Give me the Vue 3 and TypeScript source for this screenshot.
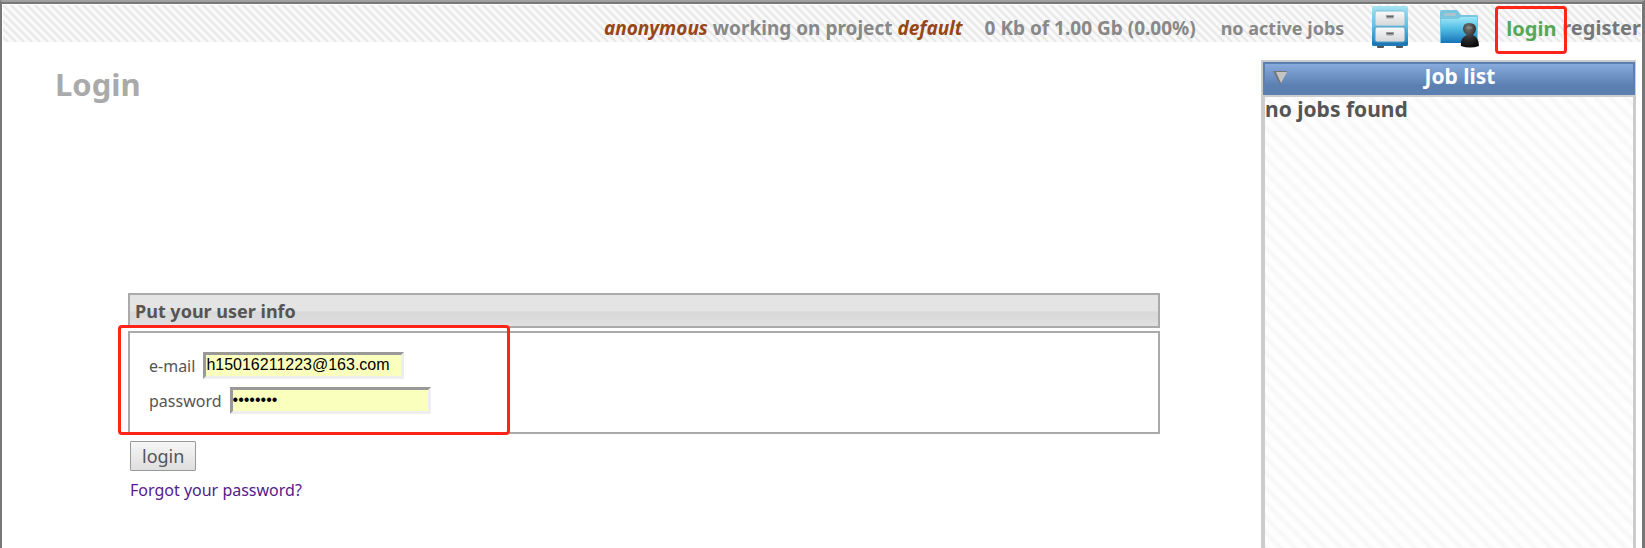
<script setup lang="ts">
import { ref } from 'vue'

const email = ref<string>('h15016211223@163.com')
const password = ref<string>('password')
const jobsOpen = ref<boolean>(true)
</script>

<template>
  <div class="page">
    <header class="topbar">
      <p class="status"><em>anonymous</em> working on project <em>default</em></p>
      <p class="quota">0 Kb of 1.00 Gb (0.00%)</p>
      <p class="active">no active jobs</p>
      <button class="icon cabinet" type="button" aria-label="Files">
        <svg width="36" height="42" viewBox="0 0 36 42">
          <defs>
            <linearGradient id="cab" x1="0" y1="0" x2="0" y2="1">
              <stop offset="0" stop-color="#a4e3f2" />
              <stop offset=".5" stop-color="#62bfe2" />
              <stop offset="1" stop-color="#1878b8" />
            </linearGradient>
            <linearGradient id="drawer" x1="0" y1="0" x2="0" y2="1">
              <stop offset="0" stop-color="#fafafa" />
              <stop offset="1" stop-color="#d4d6d8" />
            </linearGradient>
          </defs>
          <rect x="5" y="38" width="7" height="4" rx="1" fill="#50565a" />
          <rect x="24" y="38" width="7" height="4" rx="1" fill="#50565a" />
          <rect x="0" y="0" width="36" height="40" rx="2" fill="url(#cab)" />
          <path d="M0 36H36V38Q36 40 34 40H2Q0 40 0 38Z" fill="#1f78b4" />
          <rect x="3" y="5" width="30" height="15" rx="2" fill="url(#drawer)" stroke="#7cc0dc" />
          <rect x="3" y="21" width="30" height="15" rx="2" fill="url(#drawer)" stroke="#4a9fcc" />
          <path d="M14 9H22V11Q22 12.500 20 12.500H16Q14 12.500 14 11Z" fill="#9a9c9f" />
          <path d="M14 26H22V28Q22 29.500 20 29.500H16Q14 29.500 14 28Z" fill="#9a9c9f" />
          <path d="M15 10.500H21M15 27.500H21" stroke="#606264" />
        </svg>
      </button>
      <button class="icon folder" type="button" aria-label="Projects">
        <svg width="40" height="38" viewBox="0 0 40 38">
          <defs>
            <linearGradient id="fold" x1="0" y1="0" x2="0" y2="1">
              <stop offset="0" stop-color="#a0e8fa" />
              <stop offset=".45" stop-color="#52bce4" />
              <stop offset="1" stop-color="#1674b8" />
            </linearGradient>
            <radialGradient id="pawn" cx=".4" cy=".2" r=".8">
              <stop offset="0" stop-color="#777" />
              <stop offset=".5" stop-color="#333" />
              <stop offset="1" stop-color="#0c0c0c" />
            </radialGradient>
          </defs>
          <path d="M0 2Q0 0 2 0H17L21 5H36Q38 5 38 7V33H0Z" fill="#78c5dd" />
          <rect x="4" y="3" width="12" height="3" rx="1" fill="#a9c4cc" />
          <path d="M1 9H18L21 7H37V33H1Z" fill="url(#fold)" />
          <path d="M21 36Q20 28 27 25Q23 22 23 19Q23 13 29 13Q36 13 36 19Q36 22 33 25Q39 28 39 36Q30 39 21 36Z" fill="url(#pawn)" />
          <path d="M26 18Q29 14 33 18Q30 20 26 18Z" fill="#999" opacity=".5" />
        </svg>
      </button>
      <nav class="account" aria-label="Account">
        <span class="spot"><a class="login-link" href="#login">login</a></span>
        <a href="#register">register</a>
      </nav>
    </header>

    <div class="columns">
      <main class="content">
        <h1>Login</h1>
        <form class="login-form" @submit.prevent>
          <h2>Put your user info</h2>
          <div class="fields">
            <div class="row">
              <label for="email">e-mail</label>
              <input id="email" v-model="email" type="text" autocomplete="off" />
            </div>
            <div class="row">
              <label for="password">password</label>
              <input id="password" v-model="password" type="password" autocomplete="off" />
            </div>
            <span class="marker" aria-hidden="true"></span>
          </div>
          <button class="submit" type="submit">login</button>
          <a class="forgot" href="#forgot">Forgot your password?</a>
        </form>
      </main>

      <aside class="jobs">
        <div class="jobs-head">
          <button class="toggle" type="button" aria-label="Toggle job list" @click="jobsOpen = !jobsOpen">
            <svg width="14" height="14" viewBox="0 0 14 14">
              <path d="M0 0H14L7 14Z" fill="#777" />
              <path d="M3 1H14L8 12Z" fill="#c4c4c4" />
            </svg>
          </button>
          <h2>Job list</h2>
        </div>
        <div class="jobs-body">
          <p v-if="jobsOpen">no jobs found</p>
        </div>
      </aside>
    </div>
  </div>
</template>

<style>
body {
  margin: 0;
  background: #fff;
}
</style>

<style scoped>
.page {
  box-sizing: border-box;
  min-height: 100vh;
  display: flex;
  flex-direction: column;
  padding: 3px 1px 0;
  border: solid #777;
  border-width: 0 3px 0 2px;
  border-top: 2px solid #a0a0a0;
  box-shadow: inset 0 2px #777;
  font-family: "Noto Sans", "Open Sans", sans-serif;
  color: #555;
}
h1,
h2,
p {
  margin: 0;
}
.topbar {
  box-sizing: border-box;
  height: 37px;
  display: flex;
  justify-content: flex-end;
  align-items: flex-start;
  padding: 1px 0 0;
  background: linear-gradient(45deg, #e5e5e5 0, #fafafa 17%, #fafafa 33%, #e5e5e5 50%, #fafafa 67%, #fafafa 83%, #e5e5e5 100%) 0 0 / 8px 8px;
  font-size: 19px;
  font-weight: 700;
  line-height: 44px;
  color: #888;
  white-space: nowrap;
}
.status em {
  color: #974616;
}
.quota {
  margin-left: 22px;
}
.active {
  margin-left: 25px;
  font-size: 18px;
}
.icon,
.toggle {
  padding: 0;
  border: 0;
  background: none;
}
.icon svg,
.toggle svg {
  display: block;
}
.cabinet {
  margin-left: 28px;
}
.folder {
  margin: 4px 0 0 32px;
}
.account {
  display: flex;
  margin-left: 15px;
  font-size: 20px;
}
.account a {
  color: #777;
  text-decoration: none;
}
.spot {
  z-index: 1;
  box-sizing: border-box;
  width: 72px;
  height: 48px;
  margin-right: -5px;
  padding-left: 8px;
  border: 3px solid #ff2418;
  border-radius: 4px;
  line-height: 40px;
}
.account .login-link {
  color: #55a855;
}
.columns {
  flex: 1;
  display: flex;
  padding-top: 18px;
}
.content {
  flex: 1;
  padding: 0 101px 0 125px;
}
h1 {
  margin-left: -73px;
  font-size: 31px;
  line-height: 48px;
  color: #aaa;
}
.login-form {
  margin-top: 185px;
  font-size: 16px;
}
.login-form h2 {
  padding: 2px 5px 0;
  border: 2px solid #aaa;
  background: linear-gradient(#e4e4e4 50%, #d8d8d8 55%, #e0e0e0);
  font-size: 18px;
  line-height: 29px;
}
.fields {
  position: relative;
  display: flex;
  flex-direction: column;
  gap: 8px;
  margin-top: 3px;
  padding: 19px 19px 18px;
  border: 2px solid #aaa;
}
.row {
  display: flex;
  align-items: center;
  gap: 8px;
}
.row input {
  box-sizing: border-box;
  width: 201px;
  height: 27px;
  padding: 0 0 2px;
  border: 3px solid;
  border-color: #999 #eee #eee #999;
  background: #faffbd;
  color: #000;
  font: 16px "Liberation Sans", Arial, sans-serif;
}
.marker {
  position: absolute;
  top: -8px;
  left: -12px;
  width: 386px;
  height: 104px;
  border: 3px solid #ff2418;
  border-radius: 4px;
  pointer-events: none;
}
.submit {
  display: block;
  margin: 7px 0 0 2px;
  padding: 1px 11px 0;
  border: 1px solid #999;
  border-radius: 1px;
  background: linear-gradient(#f6f6f6, #dedede);
  color: #555;
  font: 18px/27px "Noto Sans", "Open Sans", sans-serif;
}
.forgot {
  display: inline-block;
  margin: 7px 0 0 2px;
  line-height: 24px;
  color: #551a8b;
  text-decoration: none;
}
.jobs {
  box-sizing: border-box;
  width: 375px;
  margin-right: 5px;
  display: flex;
  flex-direction: column;
  border: 2px solid #ccc;
  border-width: 2px 1px 0 2px;
}
.jobs-head {
  display: flex;
  align-items: flex-start;
  border: 2px solid #5a7fb1;
  background: linear-gradient(#87abdc, #5a7fb0 75%);
  color: #fff;
}
.toggle {
  margin: 7px 0 0 8px;
}
.jobs-head h2 {
  flex: 1;
  font-size: 21px;
  line-height: 25px;
  padding-bottom: 4px;
  text-align: center;
}
.jobs-body {
  flex: 1;
  border: solid #ccc;
  border-width: 2px 2px 0;
  background: linear-gradient(45deg, #f6f6f6 0, #fefefe 18%, #fefefe 32%, #f6f6f6 50%, #fefefe 68%, #fefefe 82%, #f6f6f6 100%) 0 0 / 15px 15px;
  font-size: 21px;
  font-weight: 700;
  line-height: 24px;
}
</style>
